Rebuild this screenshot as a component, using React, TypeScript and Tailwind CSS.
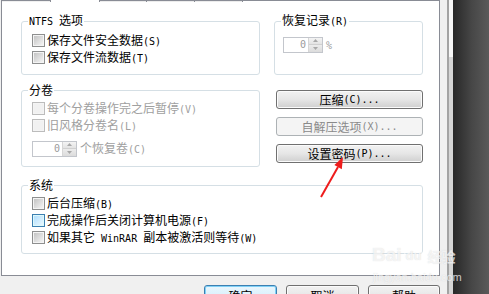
import React from "react";

function T({ s }: { s: string }) {
  const parts = s.split(/([\x00-\x7F]+)/).filter((p) => p.length > 0);
  return (
    <>
      {parts.map((p, i) =>
        /^[\x00-\x7F]+$/.test(p) ? (
          <span key={i} className="font-['DejaVu_Sans_Mono',monospace] text-[10px] whitespace-pre">
            {p}
          </span>
        ) : (
          <span key={i}>{p}</span>
        )
      )}
    </>
  );
}

type CbState = "normal" | "disabled" | "hover";

function Checkbox({ state = "normal" }: { state?: CbState }) {
  if (state === "disabled") {
    return (
      <span className="w-[13px] h-[13px] shrink-0 border border-[#bcbcbc] bg-[#f4f4f4] p-[1px]">
        <span className="block w-full h-full bg-[#f1f1f1]" />
      </span>
    );
  }
  if (state === "hover") {
    return (
      <span className="w-[13px] h-[13px] shrink-0 border border-[#3c7fb1] bg-[#def9fa] p-[1px]">
        <span className="block w-full h-full bg-linear-to-br from-[#b1dffd] to-[#e9f7fe]" />
      </span>
    );
  }
  return (
    <span className="w-[13px] h-[13px] shrink-0 border border-[#8e8f8f] bg-[#f4f4f4] p-[1px]">
      <span className="block w-full h-full bg-linear-to-br from-[#c4c4c4] to-[#f4f4f4]" />
    </span>
  );
}

function CbRow({ label, state = "normal", disabled = false }: { label: string; state?: CbState; disabled?: boolean }) {
  return (
    <div className={`flex items-center h-[17px] gap-[2px] whitespace-nowrap ${disabled ? "text-[#a0a0a0]" : "text-black"}`}>
      <Checkbox state={disabled ? "disabled" : state} />
      <span className="leading-[17px]">
        <T s={label} />
      </span>
    </div>
  );
}

function Spin({ w }: { w: string }) {
  return (
    <div className={`flex h-[16px] ${w} border border-[#c3c6cc] bg-white`}>
      <div className="flex-1 flex items-center justify-end pr-[2px] text-[#9a9a9a]">
        <T s="0" />
      </div>
      <div className="w-[14px] flex flex-col border-l border-[#d6d6d6]">
        <div className="flex-1 flex items-center justify-center bg-linear-to-b from-[#f4f4f4] to-[#e3e3e3] border-b border-[#d0d0d0]">
          <svg width="5" height="3" viewBox="0 0 5 3">
            <polygon points="2.5,0 5,3 0,3" fill="#a8a8a8" />
          </svg>
        </div>
        <div className="flex-1 flex items-center justify-center bg-linear-to-b from-[#ececec] to-[#dcdcdc]">
          <svg width="5" height="3" viewBox="0 0 5 3">
            <polygon points="0,0 5,0 2.5,3" fill="#a8a8a8" />
          </svg>
        </div>
      </div>
    </div>
  );
}

function Btn({ label, disabled = false, def = false, big = false }: { label: string; disabled?: boolean; def?: boolean; big?: boolean }) {
  const size = big ? "h-[23px] items-start pt-[1px]" : "h-[19px] items-center";
  if (disabled) {
    return (
      <div className={`${size} flex justify-center rounded-[3px] border border-[#adb2b5] bg-[#f4f4f4] text-[#8a8a8a] whitespace-nowrap`}>
        <T s={label} />
      </div>
    );
  }
  if (def) {
    return (
      <div className={`${size} flex justify-center rounded-[3px] border border-[#3c7fb1] bg-linear-to-b from-[#eaf6fd] via-[#d9f0fc] to-[#a7d9f5] shadow-[inset_0_0_0_1px_#7fd1f7] text-black whitespace-nowrap`}>
        <T s={label} />
      </div>
    );
  }
  return (
    <div className={`${size} flex justify-center rounded-[3px] border border-[#707070] bg-linear-to-b from-[#f2f2f2] via-[#e6e6e6] to-[#cfcfcf] shadow-[inset_0_0_0_1px_#fbfbfb] text-black whitespace-nowrap`}>
      <T s={label} />
    </div>
  );
}

function Group({ legend, className = "", children }: { legend: string; className?: string; children: React.ReactNode }) {
  return (
    <fieldset className={`border border-[#d5dfe5] rounded-[3px] min-w-0 ${className}`}>
      <legend className="ml-[6px] px-[1px] leading-[12px] text-black whitespace-nowrap">
        <T s={legend} />
      </legend>
      {children}
    </fieldset>
  );
}

export default function App() {
  return (
    <div className="relative w-[489px] h-[294px] overflow-hidden flex bg-[#f0f0f0] font-['Noto_Sans_CJK_SC','Noto_Sans',sans-serif] text-[12px] leading-[17px]">
      {/* dialog */}
      <div className="w-[447px] flex flex-col shrink-0">
        {/* tab strip bottoms */}
        <div className="h-[2px] shrink-0 flex ml-[1px] w-[439px]">
          <div className="w-[49px] border-t border-l border-[#898c95] bg-[#f0f0f0]" />
          <div className="w-[50px] border-x border-[#898c95] bg-white" />
          <div className="w-[47px] border-t border-r border-[#898c95] bg-[#ececec]" />
          <div className="w-[48px] border-t border-r border-[#898c95] bg-[#ececec]" />
          <div className="w-[48px] border-t border-r border-[#898c95] bg-[#ececec]" />
          <div className="flex-1 border-t border-r border-[#898c95] bg-white" />
        </div>
        {/* panel */}
        <div className="shrink-0 ml-[1px] w-[439px] h-[274px] border-x border-b border-[#898c95] bg-white pt-[12px] pl-[19px] flex flex-col">
          {/* row 1 */}
          <div className="flex gap-[14px]">
            <Group legend="NTFS 选项" className="w-[239px]">
              <div className="pl-[10px] pt-[4px] pb-[8px]">
                <CbRow label="保存文件安全数据(S)" />
                <CbRow label="保存文件流数据(T)" />
              </div>
            </Group>
            <Group legend="恢复记录(R)" className="w-[149px]">
              <div className="pl-[8px] pt-[7px] flex items-center gap-[3px] text-[#a0a0a0]">
                <Spin w="w-[40px]" />
                <span>
                  <T s="%" />
                </span>
              </div>
            </Group>
          </div>
          {/* row 2 */}
          <div className="flex mt-[9px] gap-[16px]">
            <Group legend="分卷" className="w-[239px]">
              <div className="pl-[10px] pt-[4px] pb-[8px]">
                <CbRow label="每个分卷操作完之后暂停(V)" disabled />
                <CbRow label="旧风格分卷名(L)" disabled />
                <div className="flex items-center gap-[3px] mt-[5px] text-[#a0a0a0] whitespace-nowrap">
                  <Spin w="w-[45px]" />
                  <span>
                    <T s="个恢复卷(C)" />
                  </span>
                </div>
              </div>
            </Group>
            <div className="w-[147px] mt-[6px] flex flex-col gap-[8px]">
              <Btn label="压缩(C)..." />
              <Btn label="自解压选项(X)..." disabled />
              <Btn label="设置密码(P)..." />
            </div>
          </div>
          {/* row 3 */}
          <div className="mt-[12px]">
            <Group legend="系统" className="w-[402px]">
              <div className="pl-[10px] pt-[4px] pb-[7px]">
                <CbRow label="后台压缩(B)" />
                <CbRow label="完成操作后关闭计算机电源(F)" state="hover" />
                <CbRow label="如果其它 WinRAR 副本被激活则等待(W)" />
              </div>
            </Group>
          </div>
        </div>
        {/* bottom buttons */}
        <div className="shrink-0 mt-[9px] flex justify-end gap-[9px] pr-[7px]">
          <div className="w-[73px]">
            <Btn label="确定" def big />
          </div>
          <div className="w-[73px]">
            <Btn label="取消" big />
          </div>
          <div className="w-[72px]">
            <Btn label="帮助" big />
          </div>
        </div>
      </div>
      {/* side strip */}
      <div className="w-[2px] bg-[#a3a3a3]" />
      <div className="w-[4px] flex flex-col">
        <div className="h-[57px] bg-[#f7f7f7]" />
        <div className="flex-1 bg-[#d5d5d5]" />
      </div>
      <div className="w-[2px] bg-[#2a2a2a]" />
      <div className="flex-1 bg-linear-to-r from-[#2b2b2b] via-[#474747] to-[#5a5a5a]" />

      {/* watermark */}
      <div className="absolute left-[372px] top-[243px] flex flex-col items-start text-white/70 pointer-events-none [text-shadow:0_0_1px_rgba(150,150,150,0.35)]">
        <div className="flex items-end gap-[2px] font-['Liberation_Sans',sans-serif] font-bold">
          <span className="text-[19px] leading-[24px]">Bai</span>
          <span className="rounded-[8px] border border-white/60 px-[1px] text-[13px] leading-[16px] mb-[2px]">du</span>
          <span className="font-['Noto_Sans_CJK_SC',sans-serif] text-[14px] leading-[22px] ml-[2px]">经验</span>
        </div>
        <div className="font-['Liberation_Sans',sans-serif] text-[11px] leading-[12px] ml-[1px] mt-[4px]">jingyan.baidu.com</div>
      </div>

      {/* red arrow */}
      <svg className="absolute left-0 top-0 pointer-events-none" width="489" height="294" viewBox="0 0 489 294">
        <line x1="321" y1="197" x2="338" y2="167" stroke="#ee1c1c" strokeWidth="2" />
        <polygon points="343,157 341.8,169.2 334.4,164.9" fill="#ee1c1c" />
      </svg>
    </div>
  );
}
